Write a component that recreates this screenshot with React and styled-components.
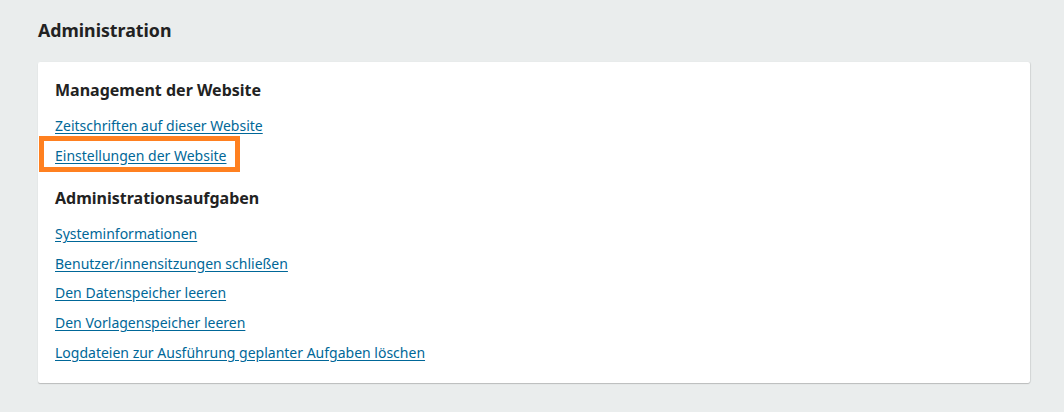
import React from "react";
import styled, { createGlobalStyle } from "styled-components";

const Global = createGlobalStyle`
  html, body { margin: 0; padding: 0; background: #eaeded; }
  body { font-family: "Noto Sans", sans-serif; color: #222; }
`;

const Page = styled.main`
  padding: 17px 34px 28px 38px;
`;

const Title = styled.h1`
  margin: 0 0 19px;
  font-size: 17.75px;
  font-weight: 700;
  line-height: 26px;
  color: #222;
`;

const Card = styled.section`
  background: #fff;
  border-radius: 2px;
  box-shadow: 0 1px 1px rgba(0, 0, 0, 0.2), 1px 0 1px rgba(0, 0, 0, 0.08);
  padding: 16px 17px 13px;
`;

const Heading = styled.h2`
  margin: ${(p) => (p.$first ? "0" : "13px")} 0 12px;
  font-size: 16px;
  font-weight: 700;
  line-height: 24px;
  color: #222;
`;

const LinkList = styled.ul`
  list-style: none;
  margin: 0;
  padding: 0;
`;

const Item = styled.li`
  position: relative;
  height: 29.6px;
  line-height: 22px;
`;

const Link = styled.a`
  font-size: 14px;
  color: #006798;
  text-decoration: underline;
  text-underline-offset: 2px;
`;

const Highlight = styled.span`
  position: absolute;
  left: -16px;
  top: -8px;
  width: 201px;
  height: 36px;
  box-sizing: border-box;
  border: 5px solid #ff8020;
  pointer-events: none;
`;

const sections = [
  {
    title: "Management der Website",
    links: [
      { label: "Zeitschriften auf dieser Website" },
      { label: "Einstellungen der Website", highlight: true },
    ],
  },
  {
    title: "Administrationsaufgaben",
    links: [
      { label: "Systeminformationen" },
      { label: "Benutzer/innensitzungen schließen" },
      { label: "Den Datenspeicher leeren" },
      { label: "Den Vorlagenspeicher leeren" },
      { label: "Logdateien zur Ausführung geplanter Aufgaben löschen" },
    ],
  },
];

export default function App() {
  return (
    <>
      <Global />
      <Page>
        <Title>Administration</Title>
        <Card>
          {sections.map((s, i) => (
            <div key={s.title}>
              <Heading $first={i === 0}>{s.title}</Heading>
              <LinkList>
                {s.links.map((l) => (
                  <Item key={l.label}>
                    <Link href="#">{l.label}</Link>
                    {l.highlight && <Highlight />}
                  </Item>
                ))}
              </LinkList>
            </div>
          ))}
        </Card>
      </Page>
    </>
  );
}
